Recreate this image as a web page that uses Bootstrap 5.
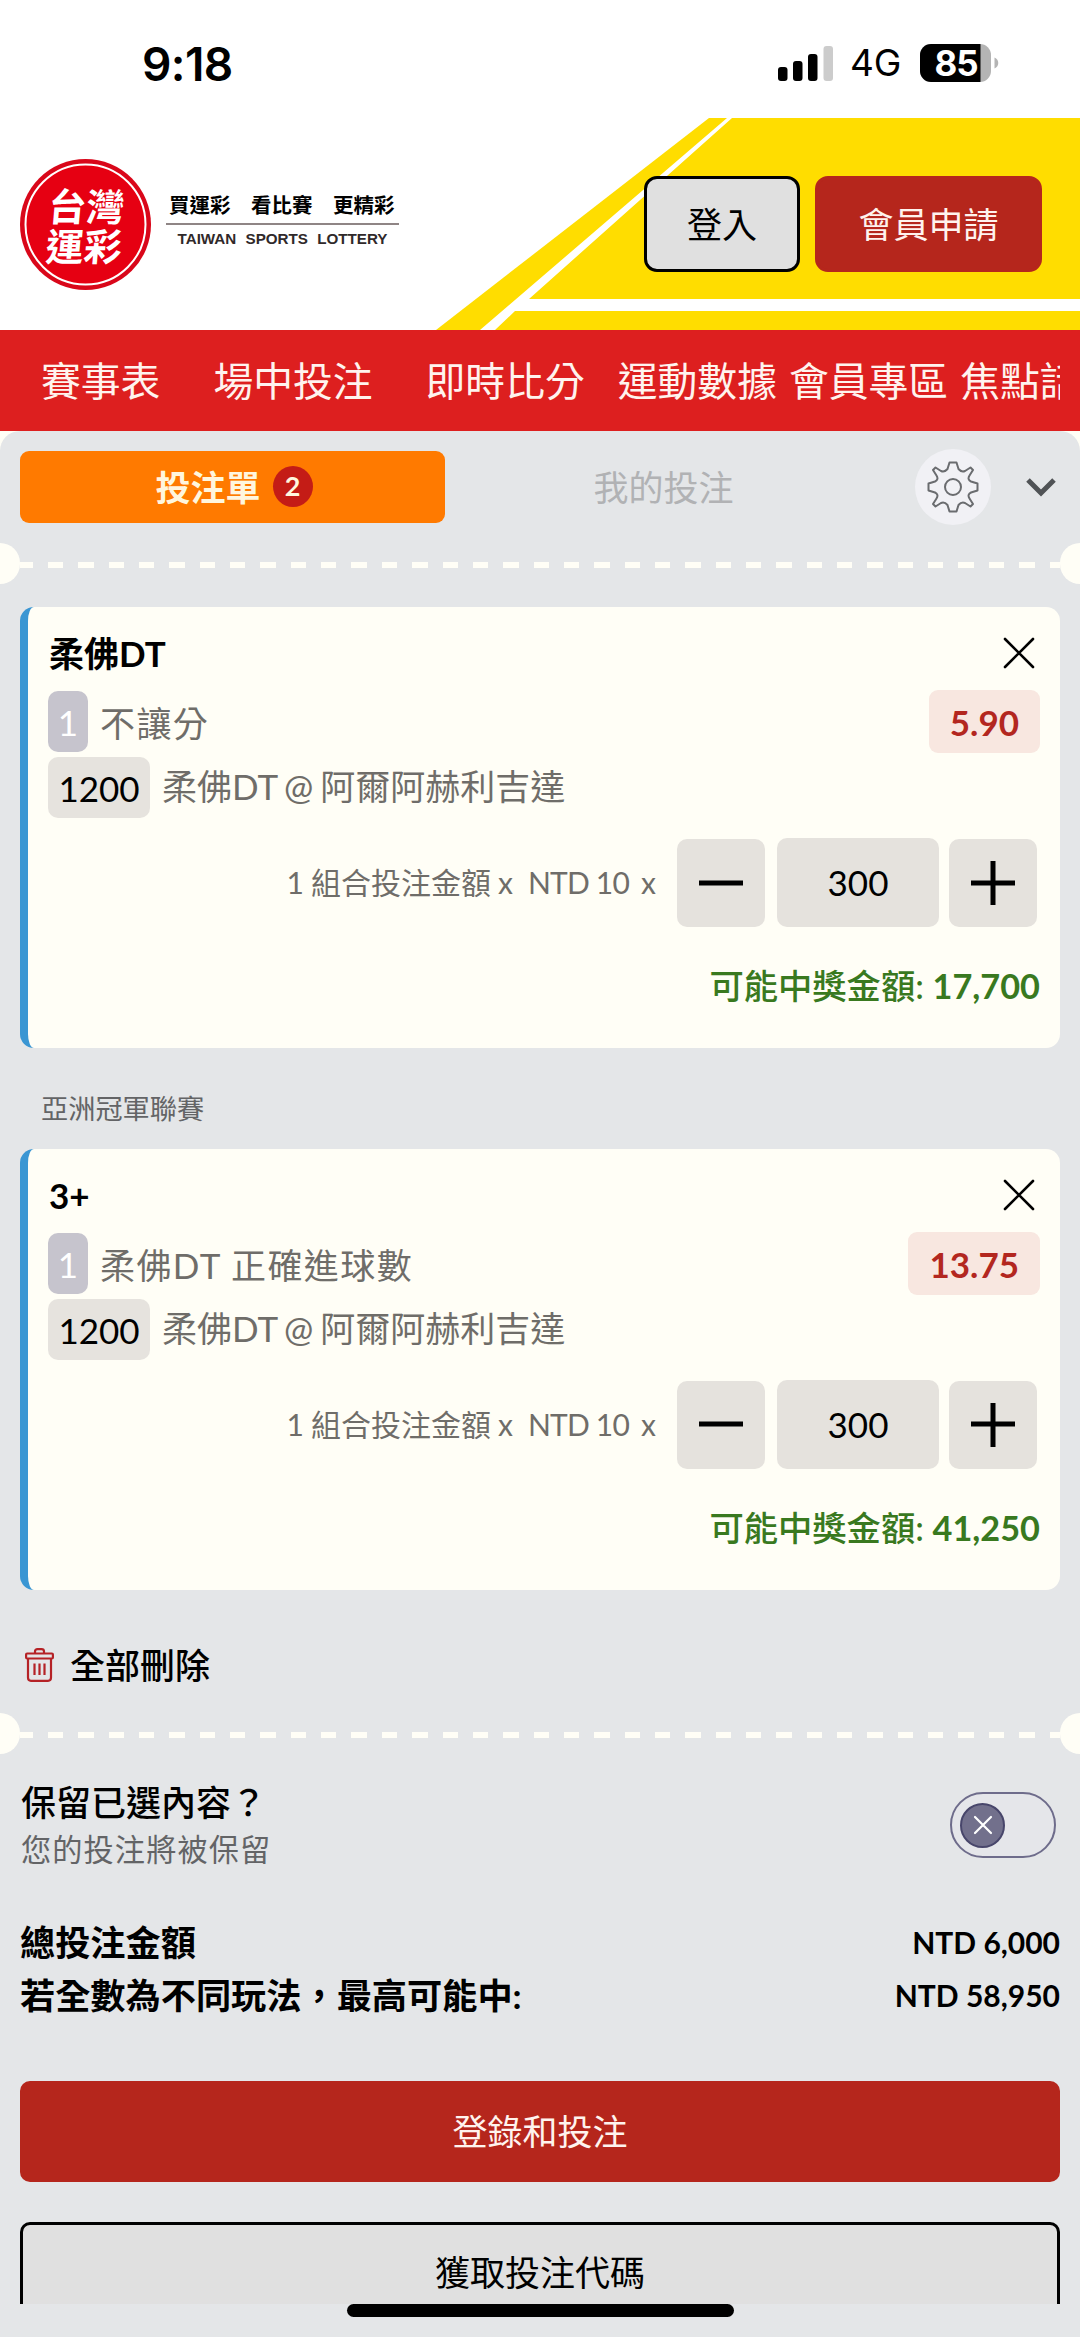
<!DOCTYPE html>
<html lang="zh-Hant">
<head>
<meta charset="utf-8">
<meta name="viewport" content="width=device-width, initial-scale=1">
<title>台灣運彩 投注單</title>
<link rel="stylesheet" href="https://cdn.jsdelivr.net/npm/bootstrap@5.3.0/dist/css/bootstrap.min.css">
<style>
  body { width: 1080px; height: 2337px; overflow: hidden; background: #fff; color: #000; font-family: Lato, "Noto Sans CJK TC", sans-serif; font-size: 35px; line-height: 44px; }
  svg { display: block; flex: none; }
  .fw-mid { font-weight: 500; }
  .muted { color: #6f6d69; }

  .statusbar { height: 118px; font-family: Inter, sans-serif; }
  .clock { font-size: 46px; font-weight: 600; letter-spacing: -.6px; margin: 10px 0 0 142px; }
  .status-icons { margin: 8px 80px 0 0; }
  .net { font-size: 37px; margin: 0 19px 0 16px; letter-spacing: -.3px; }

  .brandbar { height: 212px; background: #fff; }
  .court { top: 0; left: 0; }
  .slogan { width: 233px; margin: 0 0 9px 11px; }
  .slogan-zh { font-size: 20.5px; line-height: 28px; font-weight: 700; white-space: pre; padding-left: 3px; border-bottom: 2px solid #8f8585; height: 34px; }
  .slogan-en { font: 700 15.2px/20px "Liberation Sans", sans-serif; color: #30292a; word-spacing: 5px; text-align: center; padding-top: 4px; }
  .btn-top { height: 96px; border-radius: 13px; font-size: 35px; border-width: 3px; padding: 0; --bs-btn-line-height: 1; }
  .btn-login { width: 156px; margin-right: 15px; }
  .btn-join { width: 227px; margin-right: 38px; }
  .btn-plain, .btn-plain:hover { background: #e0e0e0; border-color: #000; color: #000; }
  .btn-brand, .btn-brand:hover { background: #b5261c; border-color: #b5261c; color: #fff3ee; }

  .mainnav { height: 101px; background: #dd1f1f; padding: 0 20px; }
  .mainnav .nav { overflow: hidden; padding-left: 21px; }
  .mainnav .nav-link { color: #fff3ee; font-size: 39.8px; line-height: 60px; padding: 0; white-space: nowrap; flex: none; margin-right: 12px; }
  .mainnav .gap-wide { margin-right: 53px; }
  .mainnav .gap-mid { margin-right: 33px; }

  .paper { background: #fffef6; }
  .slip { background: #e4e6e8; border-radius: 20px 20px 0 0; height: 1906px; }
  .slip-head { height: 111px; padding: 0 20px 0 20px; }
  .tab-on { width: 425px; height: 72px; background: #ff7a00; color: #fff6de; border-radius: 9px; font-weight: 700; gap: 12px; padding-left: 3px; }
  .count { width: 40px; height: 41px; border-radius: 50%; background: #c41c16; font-size: 27px; line-height: 40px; padding: 0; font-weight: 700; color: #fff6de; }
  .tab-off { width: 437px; color: #b1b2b4; }
  .gear { width: 76px; height: 76px; border-radius: 50%; background: #f1f1f5; margin-left: 33px; }

  .perf { height: 42px; }
  .perf-dot { width: 20px; height: 41px; background: #fffef6; flex: none; }
  .perf-dot-l { border-radius: 0 20px 20px 0; }
  .perf-dot-r { border-radius: 20px 0 0 20px; }
  .perf-line { height: 6px; margin-top: 4px; background: repeating-linear-gradient(90deg, #fffef6 0 13px, transparent 13px 28px, #fffef6 28px 30.35px); }

  .bet { margin: 0 20px; height: 441px; background: #fffef6; border: 0; border-left: 8px solid #3a96d3; border-radius: 14px; padding: 21px 20px 0 20px; color: #000; }
  .bet-title { height: 50px; font-weight: 700; padding-left: 1px; }
  .bet-title svg { margin-right: 5px; }
  .bet-market { height: 63px; margin-top: 12px; }
  .chip { border-radius: 10px; height: 61px; }
  .chip-one { background: #c6c4cd; color: #fff; width: 40px; }
  .chip-no { background: #e6e3de; width: 102px; }
  .market { letter-spacing: 1.4px; padding-top: 2px; }
  .odds { background: #f8e7e0; color: #b3271f; font-weight: 700; border-radius: 9px; height: 63px; padding: 0 21px; }
  .bet-match { height: 61px; margin-top: 4px; }
  .teams { word-spacing: -2px; padding-bottom: 3px; }
  .stake { height: 89px; margin: 20px 3px 0 0; }
  .stake-label { font-size: 30px; margin: 0 21px 2px 0; gap: 7px; }
  .ntd { letter-spacing: -.8px; margin: 0 5px 0 8px; }
  .step { width: 88px; height: 88px; background: #e5e2dd; border-radius: 10px; border: 0; padding: 0; }
  .stake-val { width: 162px; height: 89px; background: #e5e2dd; border-radius: 10px; margin: 0 10px 0 12px; padding-bottom: 2px; }
  .win { color: #39791f; margin-top: 37px; font-weight: 500; font-size: 34.3px; }
  .win b { font-weight: 700; }
  .league { font-size: 27.2px; line-height: 40px; color: #636466; margin: 41px 0 20px 41px; }

  .clear-all { height: 122px; padding: 28px 0 0 25px; gap: 16px; font-weight: 500; }
  .keep { padding: 26px 20px 0 21px; }
  .keep small { display: block; font-size: 30.2px; line-height: 46px; letter-spacing: 1.1px; color: #636466; padding-top: 2px; }
  .toggle { width: 106px; height: 66px; border: 2px solid #6e6c8b; border-radius: 33px; padding-left: 8px; margin: 12px 4px 0 0; background: #e5e6ea; }
  .knob { width: 45px; height: 45px; border-radius: 50%; background: #72708c; border: 2px solid #48466b; }
  .totals { padding: 44px 20px 0 20px; font-weight: 700; line-height: 53px; }
  .totals dt { font-weight: 700; font-size: 35.2px; }
  .totals dd { font-size: 30px; margin: 0; }
  .actions { padding: 59px 20px 0; }
  .btn-wide { height: 101px; border-radius: 10px; font-size: 35px; border-width: 3px; padding: 0; }
  .cut { height: 82px; overflow: hidden; margin-top: 40px; }
  .homebar { width: 387px; height: 13px; border-radius: 7px; background: #000; }
</style>
<script src="https://cdn.jsdelivr.net/npm/bootstrap@5.3.0/dist/js/bootstrap.bundle.min.js"></script>
</head>
<body>

<div class="statusbar d-flex justify-content-between align-items-center">
  <span class="clock">9:18</span>
  <div class="status-icons d-flex align-items-center">
    <svg width="56" height="37" viewBox="0 0 56 37"><rect x="0" y="22" width="9.5" height="14" rx="3"/><rect x="15" y="16" width="9.5" height="20" rx="3"/><rect x="30" y="9" width="9.5" height="27" rx="3"/><rect x="45.500" y="1" width="9.500" height="35" rx="3" fill="#ccc"/></svg>
    <span class="net">4G</span>
    <svg width="80" height="38" viewBox="0 0 80 38"><defs><clipPath id="cell"><rect width="71" height="38" rx="11"/></clipPath></defs><g clip-path="url(#cell)"><rect width="71" height="38" fill="#b4b4b4"/><rect width="60.500" height="38"/></g><path d="M74.500 13.500c5 2 5 9 0 11z" fill="#b4b4b4"/><text x="36.500" y="31.500" font-size="35" font-weight="700" fill="#fff" text-anchor="middle" textLength="44">85</text></svg>
  </div>
</div>

<header class="brandbar position-relative">
  <svg class="court position-absolute" width="1080" height="212" viewBox="0 0 1080 212">
    <path d="M709 0H1080V212H436z" fill="#fd0"/>
    <path d="M727 0H732L529 181H1080V193H515L495 212H480z" fill="#fff"/>
  </svg>
  <div class="position-relative d-flex align-items-center h-100 ps-3">
    <svg width="139" height="139" viewBox="0 0 139 139">
      <circle cx="69.500" cy="69.500" r="65.500" fill="#d9071a"/>
      <circle cx="69.500" cy="69.500" r="60" fill="#e60012" stroke="#fff" stroke-width="2"/>
      <g fill="#fff" font-family="Noto Sans CJK TC" font-weight="700" font-size="38" transform="skewX(-5)"><text x="37" y="66">台灣</text><text x="38" y="106">運彩</text></g>
    </svg>
    <div class="slogan">
      <div class="slogan-zh">買運彩　看比賽　更精彩</div>
      <div class="slogan-en">TAIWAN SPORTS LOTTERY</div>
    </div>
    <div class="d-flex ms-auto">
      <button class="btn btn-top btn-plain btn-login">登入</button>
      <button class="btn btn-top btn-brand btn-join">會員申請</button>
    </div>
  </div>
</header>

<nav class="mainnav d-flex align-items-center">
  <div class="nav flex-nowrap w-100">
    <a class="nav-link gap-wide">賽事表</a>
    <a class="nav-link gap-wide">場中投注</a>
    <a class="nav-link gap-mid">即時比分</a>
    <a class="nav-link">運動數據</a>
    <a class="nav-link">會員專區</a>
    <a class="nav-link">焦點話題</a>
  </div>
</nav>

<main class="paper">
<div class="slip">
  <div class="slip-head d-flex align-items-center">
    <div class="tab-on d-flex align-items-center justify-content-center"><span>投注單</span><span class="count badge text-center">2</span></div>
    <div class="tab-off text-center">我的投注</div>
    <div class="gear d-flex align-items-center justify-content-center">
      <svg width="52" height="52" viewBox="-26 -26 52 52" fill="none" stroke="#6a6c6f" stroke-width="2" stroke-linejoin="round"><circle r="8"/><path d="M-3.500 -24.500H3.500L5.500 -18Q8.500 -14.500 12 -16L17.500 -19.500L20 -17L16.500 -11.500Q14 -7.500 18 -5.500L24.500 -3.500V3.500L18 5.500Q14 7.500 16.500 11.500L20 17L17.500 19.500L12 16Q8.500 14.500 5.500 18L3.500 24.500H-3.500L-5.500 18Q-8.500 14.500 -12 16L-17.500 19.500L-20 17L-16.500 11.500Q-14 7.500 -18 5.500L-24.500 3.500V-3.500L-18 -5.500Q-14 -7.500 -16.500 -11.500L-20 -17L-17.500 -19.500L-12 -16Q-8.500 -14.500 -5.500 -18z"/></svg>
    </div>
    <svg class="ms-auto me-1" width="30" height="20" viewBox="0 0 30 20" fill="none" stroke="#505356" stroke-width="5"><path d="M2 3L15 16L28 3"/></svg>
  </div>

  <div class="perf d-flex align-items-center"><i class="perf-dot perf-dot-l"></i><i class="perf-line flex-fill"></i><i class="perf-dot perf-dot-r"></i></div>

  <div class="bet card" style="margin-top:23px">
    <div class="bet-title d-flex align-items-center justify-content-between"><span>柔佛DT</span>
      <svg width="32" height="32" viewBox="0 0 32 32" stroke="#000" stroke-width="2.600" stroke-linecap="round"><path d="M2 2L30 30M30 2L2 30"/></svg></div>
    <div class="bet-market d-flex align-items-center">
      <span class="chip chip-one d-flex align-items-center justify-content-center">1</span><span class="market muted ms-2 ps-1">不讓分</span>
      <span class="odds d-flex align-items-center ms-auto">5.90</span>
    </div>
    <div class="bet-match d-flex align-items-center"><span class="chip chip-no d-flex align-items-center justify-content-center">1200</span><span class="teams muted ms-2 ps-1">柔佛DT @ 阿爾阿赫利吉達</span></div>
    <div class="stake d-flex align-items-center justify-content-end">
      <div class="stake-label muted d-flex"><span>1</span><span>組合投注金額</span><span>x</span><span class="ntd">NTD 10</span><span>x</span></div>
      <button class="step d-flex align-items-center justify-content-center"><svg width="44" height="44" viewBox="0 0 44 44"><path d="M0 22H44" stroke="#000" stroke-width="5"/></svg></button>
      <span class="stake-val d-flex align-items-center justify-content-center">300</span>
      <button class="step d-flex align-items-center justify-content-center"><svg width="44" height="44" viewBox="0 0 44 44"><path d="M0 22H44M22 0V44" stroke="#000" stroke-width="5"/></svg></button>
    </div>
    <div class="win text-end">可能中獎金額: <b>17,700</b></div>
  </div>

  <div class="league">亞洲冠軍聯賽</div>

  <div class="bet card">
    <div class="bet-title d-flex align-items-center justify-content-between"><span>3+</span>
      <svg width="32" height="32" viewBox="0 0 32 32" stroke="#000" stroke-width="2.600" stroke-linecap="round"><path d="M2 2L30 30M30 2L2 30"/></svg></div>
    <div class="bet-market d-flex align-items-center">
      <span class="chip chip-one d-flex align-items-center justify-content-center">1</span><span class="market muted ms-2 ps-1">柔佛DT 正確進球數</span>
      <span class="odds d-flex align-items-center ms-auto">13.75</span>
    </div>
    <div class="bet-match d-flex align-items-center"><span class="chip chip-no d-flex align-items-center justify-content-center">1200</span><span class="teams muted ms-2 ps-1">柔佛DT @ 阿爾阿赫利吉達</span></div>
    <div class="stake d-flex align-items-center justify-content-end">
      <div class="stake-label muted d-flex"><span>1</span><span>組合投注金額</span><span>x</span><span class="ntd">NTD 10</span><span>x</span></div>
      <button class="step d-flex align-items-center justify-content-center"><svg width="44" height="44" viewBox="0 0 44 44"><path d="M0 21H44" stroke="#000" stroke-width="5"/></svg></button>
      <span class="stake-val d-flex align-items-center justify-content-center">300</span>
      <button class="step d-flex align-items-center justify-content-center"><svg width="44" height="44" viewBox="0 0 44 44"><path d="M0 21H44M22 0V44" stroke="#000" stroke-width="5"/></svg></button>
    </div>
    <div class="win text-end">可能中獎金額: <b>41,250</b></div>
  </div>

  <div class="clear-all d-flex align-items-center">
    <svg width="29" height="34" viewBox="0 0 29 34" fill="none" stroke="#b52226" stroke-width="2.200"><path d="M10 5V3.500Q10 1.200 12.500 1.200H16.500Q19 1.200 19 3.500V5"/><rect x="1.100" y="5.500" width="26.800" height="5" rx="1"/><path d="M3 10.500V29.500Q3 32.800 6 32.800H23Q26 32.800 26 29.500V10.500M9.500 15.500V27M14.500 15.500V27M19.500 15.500V27"/></svg>
    <span>全部刪除</span>
  </div>

  <div class="perf d-flex align-items-center"><i class="perf-dot perf-dot-l"></i><i class="perf-line flex-fill"></i><i class="perf-dot perf-dot-r"></i></div>

  <div class="keep d-flex justify-content-between">
    <div class="fw-mid">保留已選內容？<small class="fw-normal">您的投注將被保留</small></div>
    <div class="toggle d-flex align-items-center"><span class="knob d-flex align-items-center justify-content-center"><svg width="20" height="20" viewBox="0 0 20 20" stroke="#fff" stroke-width="2.200" stroke-linecap="round"><path d="M2 2L18 18M18 2L2 18"/></svg></span></div>
  </div>

  <dl class="totals mb-0">
    <div class="d-flex justify-content-between"><dt>總投注金額</dt><dd>NTD 6,000</dd></div>
    <div class="d-flex justify-content-between"><dt>若全數為不同玩法，最高可能中:</dt><dd>NTD 58,950</dd></div>
  </dl>

  <div class="actions">
    <button class="btn btn-wide btn-brand w-100 d-block">登錄和投注</button>
    <div class="cut"><button class="btn btn-wide btn-plain w-100 d-block">獲取投注代碼</button></div>
  </div>
  <div class="homebar mx-auto"></div>
</div>
</main>
</body>
</html>
